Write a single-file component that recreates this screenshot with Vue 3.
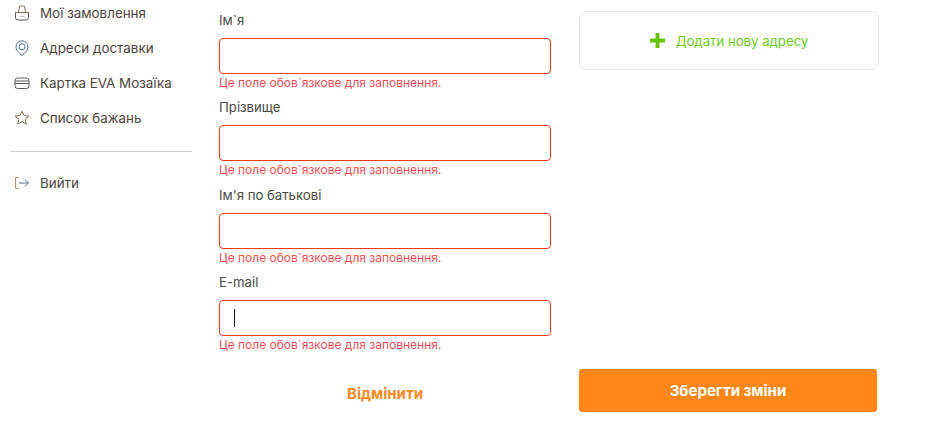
<script setup>
const menu = [
  { label: 'Мої замовлення', icon: 'basket' },
  { label: 'Адреси доставки', icon: 'pin' },
  { label: 'Картка EVA Мозаїка', icon: 'card' },
  { label: 'Список бажань', icon: 'star' }
]

const fields = [
  { label: 'Ім`я' },
  { label: 'Прізвище' },
  { label: "Ім'я по батькові" },
  { label: 'E-mail', focused: true }
]
</script>

<template>
  <div class="page">
    <aside class="sidebar">
      <ul class="menu">
        <li v-for="item in menu" :key="item.label" class="menu-item">
          <svg class="menu-icon" viewBox="0 0 16 16" fill="none" stroke-width="1">
            <template v-if="item.icon === 'basket'">
              <path d="M1.500 7.500h13v5a2.500 2.500 0 0 1-2.500 2.500H4a2.500 2.500 0 0 1-2.500-2.500z" stroke="#5f5650" />
              <path d="M1 7.500h14M4.500 7.500L5.500 1h5l1 6.500" stroke="#8a7060" />
              <path d="M5.800 11.300h.8M7.700 11.300h.8M9.600 11.300h.8" stroke="#5f5650" />
            </template>
            <template v-else-if="item.icon === 'pin'">
              <path d="M8 15.500C4.500 12.500 2 10 2 6.800a6 6 0 0 1 12 0c0 3.200-2.500 5.700-6 8.700z" stroke="#55708a" />
              <circle cx="8" cy="6.800" r="3" stroke="#55708a" />
            </template>
            <template v-else-if="item.icon === 'card'">
              <rect x="1" y="3" width="14" height="10.500" rx="2.500" stroke="#5f5a58" />
              <path d="M1 6h14M1 8.500h14" stroke="#5f5a58" />
            </template>
            <path
              v-else
              d="M8 1.200l2 4.400 4.800.5-3.600 3.200 1 4.700L8 11.600 3.800 14l1-4.700-3.600-3.200 4.800-.5z"
              stroke="#7d6a50"
            />
          </svg>
          <span>{{ item.label }}</span>
        </li>
      </ul>
      <hr class="divider" />
      <div class="menu-item">
        <svg class="menu-icon" viewBox="0 0 16 16" fill="none" stroke-width="1">
          <path d="M4.500 2.500H1.500v11h3" stroke="#b89078" />
          <path d="M5 8h9.500M11 4.700L14.500 8 11 11.300" stroke="#55708a" />
        </svg>
        <span>Вийти</span>
      </div>
    </aside>

    <main class="content">
      <form class="form" @submit.prevent>
        <div v-for="field in fields" :key="field.label" class="field">
          <label class="field-label">{{ field.label }}</label>
          <div class="field-input">
            <span v-if="field.focused" class="caret"></span>
          </div>
          <p class="field-error">Це поле обов`язкове для заповнення.</p>
        </div>
      </form>

      <div class="add-address">
        <svg class="plus" viewBox="0 0 14 14">
          <path d="M5.200 0h3.600v5.200H14v3.600H8.800V14H5.200V8.800H0V5.200h5.200z" fill="#66c30a" />
        </svg>
        <span>Додати нову адресу</span>
      </div>

      <button class="btn-cancel" type="button">Відмінити</button>
      <button class="btn-save" type="button">Зберегти зміни</button>
    </main>
  </div>
</template>

<style>
body {
  background: #fff;
}
</style>

<style scoped>
.page {
  display: flex;
  width: 938px;
  height: 442px;
  overflow: hidden;
  font-family: Inter, "Noto Sans", sans-serif;
  color: #4a4444;
}

.sidebar {
  width: 182px;
  margin-left: 10px;
  flex-shrink: 0;
}

.menu {
  list-style: none;
  margin: -5px 0 0;
  padding: 0;
}

.menu-item {
  display: flex;
  align-items: center;
  gap: 10px;
  height: 35px;
  padding-left: 4px;
  font-size: 13.4px;
  color: #4d4442;
}

.menu-icon {
  width: 16px;
  height: 16px;
  flex-shrink: 0;
}

.divider {
  border: 0;
  border-top: 1px solid #cfcfcf;
  margin: 16px 0 13px;
}

.content {
  display: grid;
  grid-template-columns: 332px 300px;
  grid-template-rows: 360px 52px;
  column-gap: 28px;
  margin-left: 27px;
}

.form {
  display: flex;
  flex-direction: column;
  padding-top: 12px;
  gap: 7.33px;
}

.field-label {
  display: block;
  height: 19px;
  line-height: 17px;
  font-size: 13.2px;
  color: #4a4a48;
}

.field-input {
  display: flex;
  align-items: center;
  height: 36px;
  margin-top: 7px;
  padding-left: 14px;
  box-sizing: border-box;
  border: 1px solid #f03a17;
  border-radius: 4px;
}

.caret {
  width: 1px;
  height: 18px;
  background: #111;
}

.field-error {
  margin: 0;
  height: 18px;
  line-height: 17px;
  font-size: 12px;
  color: #f5505a;
}

.add-address {
  display: flex;
  align-items: center;
  justify-content: center;
  gap: 11px;
  height: 59px;
  margin-top: 11px;
  box-sizing: border-box;
  border: 1px solid #e8e8e8;
  border-radius: 8px;
  font-size: 13.2px;
  color: #6fcb20;
}

.plus {
  width: 15px;
  height: 15px;
}

.btn-cancel {
  border: 0;
  background: none;
  margin-top: 14px;
  font: 700 15px Inter, "Noto Sans", sans-serif;
  color: #ff8a24;
}

.btn-save {
  width: 298px;
  margin-top: 9px;
  border: 0;
  border-radius: 3px;
  background: #ff8717;
  font: 700 15px Inter, "Noto Sans", sans-serif;
  color: #fff;
}
</style>
